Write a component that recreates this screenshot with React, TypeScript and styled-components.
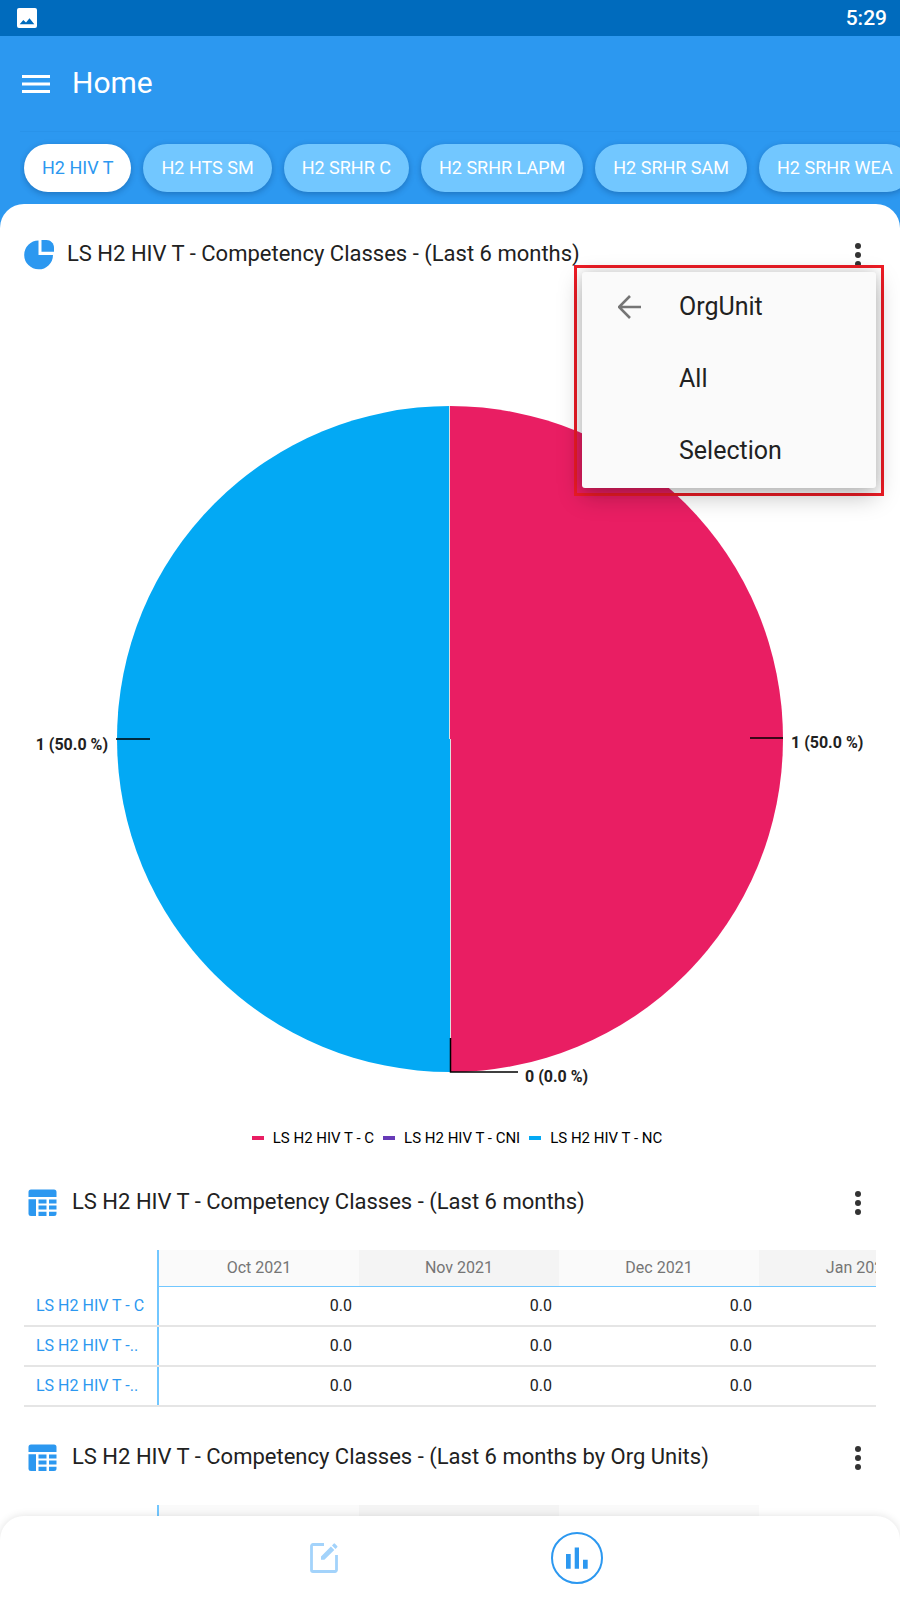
import React from "react";
import styled, { createGlobalStyle } from "styled-components";

const color = {
  primary: "#2c98f0",
  primaryDark: "#006bbd",
  primaryLight: "#72c7ff",
  text: "#212121",
  muted: "#757575",
  rule: "#e5e5e5",
  pink: "#e91e63",
  purple: "#673ab7",
  sky: "#03a9f4",
};

const GlobalStyle = createGlobalStyle`
  *, *::before, *::after { box-sizing: border-box; }
  body {
    margin: 0;
    background: #fff;
    color: ${color.text};
    font-family: Roboto, "Liberation Sans", sans-serif;
  }
  button { font: inherit; color: inherit; border: 0; padding: 0; background: none; cursor: pointer; }
  svg { display: block; }
`;

const Screen = styled.div`
  display: flex;
  flex-direction: column;
  height: 100vh;
  overflow: hidden;
  background: ${color.primary};
`;

const StatusBar = styled.div`
  display: flex;
  flex: none;
  align-items: center;
  justify-content: space-between;
  height: 36px;
  padding: 0 13px 0 17px;
  background: ${color.primaryDark};
  color: #fff;
  font-size: 21px;
  font-weight: 500;
  line-height: 38px;
`;

const Header = styled.header`
  flex: none;
  color: #fff;
`;

const TitleBar = styled.div`
  display: flex;
  align-items: center;
  gap: 22px;
  height: 95px;
  margin: 0 21px;
`;

const PageTitle = styled.h1`
  margin: 0;
  padding-bottom: 2px;
  font-size: 30px;
  font-weight: 400;
`;

const Chips = styled.nav`
  display: flex;
  gap: 12px;
  margin-left: 20px;
  padding: 12px 4px;
  border-top: 1px solid #2993ea;
  overflow: hidden;
`;

const Chip = styled.button<{ $active?: boolean }>`
  && {
    flex: none;
    height: 48px;
    padding: 0 18px 2px;
    border-radius: 24px;
    font-size: 18px;
    background: ${(p) => (p.$active ? "#fff" : color.primaryLight)};
    color: ${(p) => (p.$active ? color.primary : "#fff")};
    box-shadow: 0 2px 6px rgba(0, 40, 90, 0.32);
  }
`;

const Content = styled.main`
  flex: 1;
  min-height: 0;
  overflow-y: auto;
  scrollbar-width: none;
  background: #fff;
  border-radius: 24px 24px 0 0;
`;

const Card = styled.section`
  position: relative;
  padding: 0 24px;
`;

const CardHeader = styled.div<{ $inset?: boolean }>`
  display: flex;
  align-items: center;
  gap: ${(p) => (p.$inset ? 15 : 13)}px;
  height: 98px;
  padding: 4px 12px 0 ${(p) => (p.$inset ? 4 : 0)}px;
`;

const CardTitle = styled.h2`
  flex: 1;
  margin: 0;
  padding-bottom: 4px;
  font-size: 22px;
  font-weight: 400;
  white-space: nowrap;
`;

const PieChart = styled.svg`
  width: 100%;
  max-width: 852px;
  height: auto;
  margin: 0 auto;
`;

const PieLabel = styled.text`
  font-size: 16px;
  font-weight: 700;
  fill: ${color.text};
`;

const Legend = styled.ul`
  display: flex;
  justify-content: center;
  gap: 9px;
  height: 34px;
  margin: 0;
  padding: 6px 0 0 14px;
  list-style: none;
  color: #000;
  font-size: 15px;
  line-height: 28px;
`;

const LegendItem = styled.li<{ $color: string }>`
  display: flex;
  align-items: center;
  gap: 9px;
  &::before {
    content: "";
    width: 12px;
    height: 4px;
    background: ${(p) => p.$color};
  }
`;

const MenuFrame = styled.div`
  position: absolute;
  z-index: 1;
  top: 61px;
  right: 16px;
  padding: 4px 5px 5px;
  border: 3px solid #ee1c25;
`;

const Menu = styled.div`
  display: flex;
  flex-direction: column;
  width: 294px;
  border-radius: 3px;
  background: #fafafa;
  box-shadow: 0 8px 24px rgba(0, 0, 0, 0.26), 0 0 12px rgba(0, 0, 0, 0.14);
`;

const MenuItem = styled.button`
  && {
    display: grid;
    grid-template-columns: 61px 1fr;
    align-items: center;
    height: 72px;
    padding: 0 36px 3px;
    font-size: 25px;
    text-align: left;
  }
`;

const MenuText = styled.span`
  grid-column: 2;
`;

const TableScroller = styled.div`
  overflow: hidden;
`;

const Table = styled.table`
  table-layout: fixed;
  width: 0;
  border-collapse: separate;
  border-spacing: 0;
  font-size: 16px;
`;

const LabelCol = styled.col`
  width: 135px;
`;

const ValueCol = styled.col`
  width: 200px;
`;

const Corner = styled.td`
  height: 37px;
  padding: 0;
  border-right: 2px solid ${color.primaryLight};
`;

const ColumnHead = styled.th`
  height: 37px;
  padding: 0 0 2px;
  border-bottom: 1px solid ${color.primaryLight};
  background: #fafafa;
  color: ${color.muted};
  font-weight: 400;
  &:nth-child(odd) { background: #f4f4f4; }
`;

const RowHead = styled.th`
  height: 40px;
  padding: 0 0 4px 12px;
  background:
    linear-gradient(${color.rule}, ${color.rule}) bottom / 100% 2px no-repeat,
    linear-gradient(${color.primaryLight}, ${color.primaryLight}) right / 2px 100% no-repeat;
  color: ${color.primary};
  font-weight: 400;
  text-align: left;
  white-space: nowrap;
`;

const Value = styled.td`
  height: 40px;
  padding: 0 7px 2px 0;
  border-bottom: 2px solid ${color.rule};
  text-align: right;
`;

const BottomArea = styled.div`
  flex: none;
  background: #fff;
`;

const BottomNav = styled.nav`
  position: relative;
  display: flex;
  justify-content: center;
  height: 84px;
  background: #fff;
  border-radius: 24px 24px 0 0;
  box-shadow: 0 0 8px rgba(0, 0, 0, 0.12);
`;

const NavButton = styled.button`
  display: grid;
  place-items: center;
  width: 253px;
  height: 84px;
`;

const Photo = () => (
  <svg width="20" height="20" viewBox="0 0 20 20" aria-hidden="true">
    <path fill="#fff" fillRule="evenodd" d="M2 0h16a2 2 0 0 1 2 2v16a2 2 0 0 1-2 2H2a2 2 0 0 1-2-2V2a2 2 0 0 1 2-2zM2.700 16.300h14.600L12.500 10.200 9 14.500 6.300 11.900z" />
  </svg>
);

const Hamburger = () => (
  <svg width="29" height="18" viewBox="0 0 29 18" aria-hidden="true">
    <path fill="#fff" d="M1 0h28v3H1zM1 7.500h28v3H1zM1 15h28v3H1z" />
  </svg>
);

const PieIcon = () => (
  <svg width="30" height="30" viewBox="0 0 30 30" aria-hidden="true">
    <path fill={color.primary} d="M14.500 .5A14.400 14.400 0 1 0 29 15H14.500z" />
    <path fill={color.primary} d="M17.500 0h5C26.500 0 30 3.500 30 7.500v4.300H17.500z" />
  </svg>
);

const TableIcon = () => (
  <svg width="29" height="28" viewBox="0 0 29 28" fill={color.primary} aria-hidden="true">
    <path d="M3 .5h23a2.500 2.500 0 0 1 2.500 2.500v5H.5V3A2.500 2.500 0 0 1 3 .5z" />
    <path d="M.5 10.300H8V27H3A2.500 2.500 0 0 1 .5 24.500z" />
    <path d="M10.500 10.500h8v4h-8zM21 10.500h7.500v4H21zM10.500 16.500h8v4h-8zM21 16.500h7.500v4H21zM10.500 22.800h8V27h-8zM21 22.800h7.500v1.700A2.500 2.500 0 0 1 26 27h-5z" />
  </svg>
);

const Dots = () => (
  <svg width="12" height="24" viewBox="0 0 12 24" fill="#333" aria-hidden="true">
    <circle cx="6" cy="3" r="3" />
    <circle cx="6" cy="12" r="3" />
    <circle cx="6" cy="21" r="3" />
  </svg>
);

const BackArrow = () => (
  <svg width="24" height="24" viewBox="0 0 24 24" aria-hidden="true">
    <path d="M12 1 1 12l11 11M1 12H23" fill="none" stroke="#757575" strokeWidth="2.600" />
  </svg>
);

const EditIcon = () => (
  <svg width="28" height="30" viewBox="0 0 28 30" aria-hidden="true">
    <path d="M14 1.500H3A1.500 1.500 0 0 0 1.500 3v24A1.500 1.500 0 0 0 3 28.500h22a1.500 1.500 0 0 0 1.500-1.500V12" fill="none" stroke="#a3d3fb" strokeWidth="2.800" />
    <path d="M11 13.500v3.300h3.400L24.300 7l-3.400-3.400zM22 2.500l1.600-1.800a1 1 0 0 1 1.400 0l2.200 2.200a1 1 0 0 1 0 1.400L25.500 6z" fill="#a3d3fb" />
  </svg>
);

const ChartIcon = () => (
  <svg width="52" height="52" viewBox="0 0 52 52" aria-hidden="true">
    <circle cx="26" cy="26" r="25" fill="none" stroke={color.primary} strokeWidth="2" />
    <path fill={color.primary} d="M15 22h4.700v14.700H15zM23.700 15.500H28v21.200h-4.300zM32 27.700h4.700v9H32z" />
  </svg>
);

const chips = ["H2 HIV T", "H2 HTS SM", "H2 SRHR C", "H2 SRHR LAPM", "H2 SRHR SAM", "H2 SRHR WEA"];
const months = ["Oct 2021", "Nov 2021", "Dec 2021", "Jan 2022"];
const rows = ["LS H2 HIV T - C", "LS H2 HIV T -..", "LS H2 HIV T -.."];
const values = ["0.0", "0.0", "0.0", ""];
const series = [
  { name: "LS H2 HIV T - C", fill: color.pink },
  { name: "LS H2 HIV T - CNI", fill: color.purple },
  { name: "LS H2 HIV T - NC", fill: color.sky },
];

export default function App() {
  return (
    <Screen>
      <GlobalStyle />
      <StatusBar>
        <Photo />
        <span>5:29</span>
      </StatusBar>
      <Header>
        <TitleBar>
          <button aria-label="Open menu"><Hamburger /></button>
          <PageTitle>Home</PageTitle>
        </TitleBar>
        <Chips aria-label="Dashboards">
          {chips.map((name, i) => (
            <Chip key={name} $active={i === 0}>{name}</Chip>
          ))}
        </Chips>
      </Header>
      <Content>
        <Card>
          <CardHeader>
            <PieIcon />
            <CardTitle>LS H2 HIV T - Competency Classes - (Last 6 months)</CardTitle>
            <button aria-label="Chart options"><Dots /></button>
          </CardHeader>
          <MenuFrame>
            <Menu role="menu">
              <MenuItem role="menuitem"><BackArrow /><MenuText>OrgUnit</MenuText></MenuItem>
              <MenuItem role="menuitem"><MenuText>All</MenuText></MenuItem>
              <MenuItem role="menuitem"><MenuText>Selection</MenuText></MenuItem>
            </Menu>
          </MenuFrame>
          <PieChart viewBox="0 0 852 816" role="img" aria-label="Competency classes">
            <path d="M426 104a333 333 0 0 0 0 666z" fill={color.sky} />
            <path d="M426 104a333 333 0 0 1 0 666z" fill={color.pink} />
            <path d="M425.500 104v333M426.500 437v333" stroke="#ddd" strokeWidth="1" />
            <path d="M92 437h34M726 436h33M426.500 736v34H494" fill="none" stroke="#000" strokeWidth="1.500" />
            <PieLabel x="84" y="448" textAnchor="end">1 (50.0 %)</PieLabel>
            <PieLabel x="767" y="446">1 (50.0 %)</PieLabel>
            <PieLabel x="501" y="780">0 (0.0 %)</PieLabel>
          </PieChart>
          <Legend>
            {series.map((s) => (
              <LegendItem key={s.name} $color={s.fill}>{s.name}</LegendItem>
            ))}
          </Legend>
        </Card>
        <Card>
          <CardHeader $inset>
            <TableIcon />
            <CardTitle>LS H2 HIV T - Competency Classes - (Last 6 months)</CardTitle>
            <button aria-label="Table options"><Dots /></button>
          </CardHeader>
          <TableScroller>
            <Table>
              <colgroup>
                <LabelCol />
                {months.map((m) => <ValueCol key={m} />)}
              </colgroup>
              <thead>
                <tr>
                  <Corner />
                  {months.map((m) => <ColumnHead key={m} scope="col">{m}</ColumnHead>)}
                </tr>
              </thead>
              <tbody>
                {rows.map((r, i) => (
                  <tr key={i}>
                    <RowHead scope="row">{r}</RowHead>
                    {values.map((v, j) => <Value key={j}>{v}</Value>)}
                  </tr>
                ))}
              </tbody>
            </Table>
          </TableScroller>
        </Card>
        <Card>
          <CardHeader $inset>
            <TableIcon />
            <CardTitle>LS H2 HIV T - Competency Classes - (Last 6 months by Org Units)</CardTitle>
            <button aria-label="Table options"><Dots /></button>
          </CardHeader>
          <TableScroller>
            <Table>
              <colgroup>
                <LabelCol />
                <ValueCol /><ValueCol /><ValueCol />
              </colgroup>
              <thead>
                <tr>
                  <Corner />
                  <ColumnHead scope="col" /><ColumnHead scope="col" /><ColumnHead scope="col" />
                </tr>
              </thead>
            </Table>
          </TableScroller>
        </Card>
      </Content>
      <BottomArea>
        <BottomNav aria-label="Views">
          <NavButton aria-label="Data entry"><EditIcon /></NavButton>
          <NavButton aria-label="Analytics"><ChartIcon /></NavButton>
        </BottomNav>
      </BottomArea>
    </Screen>
  );
}
